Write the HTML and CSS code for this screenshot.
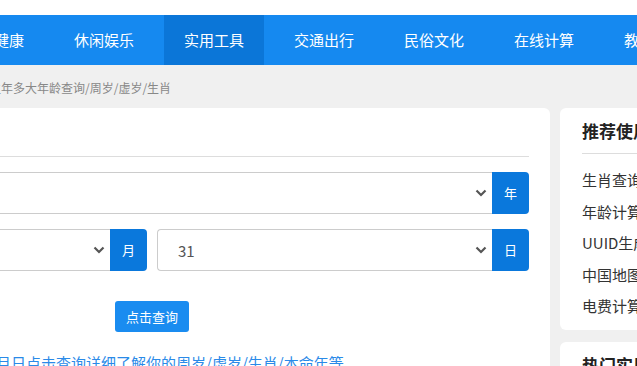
FILE: index.html
```html
<!DOCTYPE html>
<html lang="zh-CN">
<head>
	<meta charset="UTF-8">
	<title>出生年多大年龄查询</title>
	<link rel="stylesheet" href="styles.css">
</head>
<body>
	<div class="top"></div>
	<div class="nav">
		<ul class="wrap">
			<li>生活服务</li>
			<li>医疗健康</li>
			<li>休闲娱乐</li>
			<li class="on">实用工具</li>
			<li>交通出行</li>
			<li>民俗文化</li>
			<li>在线计算</li>
			<li>教育学习</li>
		</ul>
	</div>
	<div class="wrap crumb">
		<span class="path">首页 &gt; 实用工具 &gt; 出生</span><span>年多大年龄查询/周岁/虚岁/生肖</span>
	</div>
	<div class="wrap main">
		<div class="box">
			<div class="box-hd">年龄查询</div>
			<div class="form">
				<div class="group">
					<div class="select">
						<span>1990</span>
						<svg width="12" height="8" viewBox="0 0 12 8"><path d="M1.5 1.5 6 6l4.5-4.5" fill="none" stroke="#555" stroke-width="2.2"/></svg>
					</div>
					<span class="addon">年</span>
				</div>
				<div class="row">
					<div class="group">
						<div class="select">
							<span>12</span>
							<svg width="12" height="8" viewBox="0 0 12 8"><path d="M1.5 1.5 6 6l4.5-4.5" fill="none" stroke="#555" stroke-width="2.2"/></svg>
						</div>
						<span class="addon">月</span>
					</div>
					<div class="group">
						<div class="select">
							<span>31</span>
							<svg width="12" height="8" viewBox="0 0 12 8"><path d="M1.5 1.5 6 6l4.5-4.5" fill="none" stroke="#555" stroke-width="2.2"/></svg>
						</div>
						<span class="addon">日</span>
					</div>
				</div>
				<div class="btn-line"><span class="btn">点击查询</span></div>
				<p class="tip"><span class="lead">请选择你的出生年月</span>日点击查询详细了解你的周岁/虚岁/生肖/本命年等</p>
			</div>
		</div>
		<div class="side">
			<div class="side-box">
				<div class="side-hd">推荐使用工具</div>
				<ul>
					<li>生肖查询</li>
					<li>年龄计算器</li>
					<li>UUID生成器</li>
					<li>中国地图</li>
					<li>电费计算器</li>
				</ul>
			</div>
			<div class="side-box">
				<div class="side-hd">热门实用工具</div>
			</div>
		</div>
	</div>
</body>
</html>
```

FILE: styles.css
```css
*{
	margin: 0;
	padding: 0;
	box-sizing: border-box;
}
body{
	background: #f0f0f0;
	font-family: "Noto Sans CJK SC", "Liberation Sans", sans-serif;
	color: #333;
	overflow: hidden;
}
ul{
	list-style: none;
}
.wrap{
	width: 1105px;
	margin-left: -245px;
}
.top{
	height: 15px;
	background: #fff;
}
.nav{
	height: 50px;
	background: #1589f0;
}
	.nav ul{
		display: flex;
		padding-left: 79px;
	}
		.nav li{
			width: 100px;
			margin-right: 10px;
			text-align: center;
			font-size: 15px;
			line-height: 50px;
			color: #fff;
			flex-shrink: 0;
		}
		.nav li.on{
			background: #0b76d8;
		}
.crumb{
	height: 43px;
	padding-top: 3px;
	font-size: 12px;
	line-height: 40px;
	color: #888;
	white-space: nowrap;
}
	.crumb .path{
		display: inline-block;
		width: 246px;
		text-align: right;
	}
.main{
	display: flex;
	gap: 10px;
	align-items: flex-start;
}
	.box{
		width: 795px;
		background: #fff;
		border-radius: 6px;
		padding: 0 21px 0 20px;
		height: 280px;
	}
		.box-hd{
			height: 49px;
			line-height: 48px;
			font-size: 16px;
			font-weight: bold;
			border-bottom: 1px solid #ddd;
		}
		.form{
			padding-top: 15px;
		}
			.row{
				display: flex;
				gap: 10px;
				margin-top: 15px;
			}
				.row .group{
					flex: 1;
				}
			.group{
				display: flex;
				height: 42px;
			}
				.select{
					flex: 1;
					display: flex;
					align-items: center;
					justify-content: space-between;
					padding: 0 5px 0 20px;
					border: 1px solid #ccc;
					border-right: 0;
					border-radius: 4px 0 0 4px;
					font-size: 15px;
					color: #555;
				}
				.addon{
					width: 37px;
					background: #0a78dc;
					color: #fff;
					font-size: 13px;
					text-align: center;
					line-height: 42px;
					border-radius: 0 4px 4px 0;
				}
			.btn-line{
				text-align: center;
				margin-top: 30px;
				height: 31px;
			}
				.btn{
					display: inline-block;
					width: 74px;
					height: 31px;
					line-height: 31px;
					background: #1a8cf0;
					color: #fff;
					font-size: 13px;
					border-radius: 3px;
				}
			.tip{
				margin-top: 21px;
				font-size: 15px;
				line-height: 20px;
				color: #2a8ae8;
				white-space: nowrap;
			}
				.tip .lead{
					display: inline-block;
					width: 236px;
					text-align: right;
				}
	.side{
		width: 300px;
	}
		.side-box{
			background: #fff;
			border-radius: 6px;
			padding: 0 22px 8px;
			margin-bottom: 12px;
		}
			.side-hd{
				padding: 11px 0 10px;
				line-height: 24px;
				font-size: 17px;
				font-weight: bold;
				color: #222;
				border-bottom: 1px solid #ddd;
			}
			.side-box ul{
				padding-top: 10px;
			}
				.side-box li{
					font-size: 15px;
					line-height: 31.6px;
					color: #333;
				}
```
